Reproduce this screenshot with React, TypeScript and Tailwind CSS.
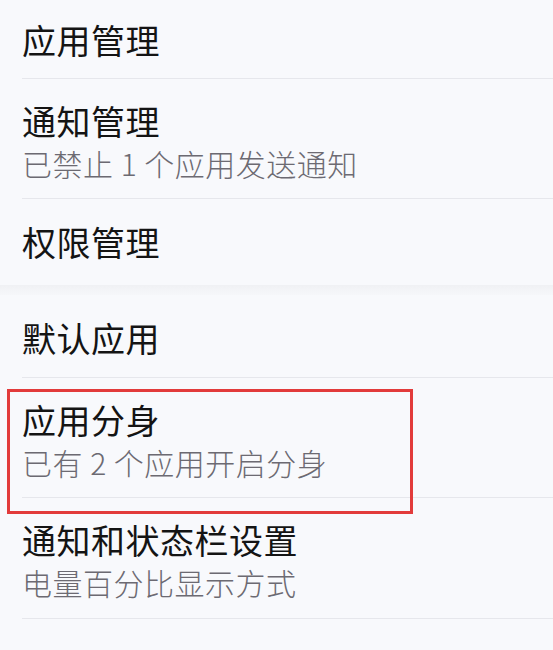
const font = { fontFamily: '"Noto Sans CJK SC", "Noto Sans", sans-serif' };

function Row({ title, sub, className = '' }: { title: string; sub?: string; className?: string }) {
  return (
    <div className={`ml-[22px] border-b border-[#e6e7ec] ${className}`}>
      <div className="text-[34px] leading-[40px] tracking-[0.5px] text-[#141414]">{title}</div>
      {sub && <div className="mt-[2px] text-[30px] leading-[40px] font-light tracking-[0.5px] text-[#6c6a72]">{sub}</div>}
    </div>
  );
}

export default function App() {
  return (
    <div className="min-h-screen w-[553px] bg-[#f8f9fc] overflow-hidden" style={font}>
      <Row title="应用管理" className="h-[79px] pt-[20px]" />
      <Row title="通知管理" sub="已禁止 1 个应用发送通知" className="h-[120px] pt-[22px]" />
      <div className="ml-[22px] h-[86px] pt-[23px]">
        <div className="text-[34px] leading-[40px] tracking-[0.5px] text-[#141414]">权限管理</div>
      </div>
      <div className="h-[10px] bg-gradient-to-b from-[#f0f1f4] to-[#f6f7fa]" />
      <Row title="默认应用" className="h-[83px] pt-[23px]" />
      <div className="relative">
        <Row title="应用分身" sub="已有 2 个应用开启分身" className="h-[120px] pt-[22px]" />
        {/* annotation box */}
        <div className="pointer-events-none absolute left-[7px] top-[11px] h-[125px] w-[406px] border-[3px] border-[#e23b3b]" />
      </div>
      <Row title="通知和状态栏设置" sub="电量百分比显示方式" className="h-[121px] pt-[22px]" />
    </div>
  );
}
